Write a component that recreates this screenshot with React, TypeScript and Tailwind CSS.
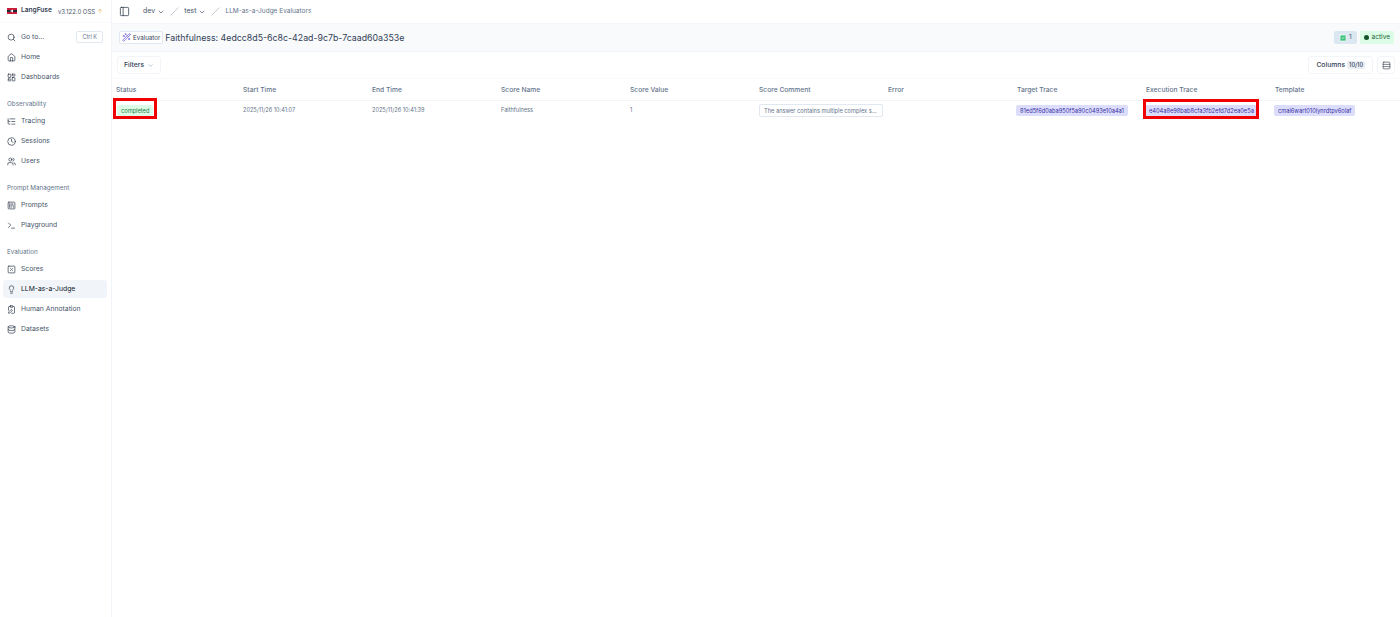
import {
  ArrowUp,
  ChevronDown,
  Clock,
  ClipboardPen,
  Database,
  Home,
  LayoutDashboard,
  Lightbulb,
  ListTree,
  PanelLeft,
  Rows3,
  Search,
  Slash,
  SquareCheck,
  SquareLibrary,
  SquarePercent,
  Terminal,
  Users,
  WandSparkles,
} from "lucide-react";

const groups = [
  {
    label: "Observability",
    items: [
      { name: "Tracing", icon: ListTree },
      { name: "Sessions", icon: Clock },
      { name: "Users", icon: Users },
    ],
  },
  {
    label: "Prompt Management",
    items: [
      { name: "Prompts", icon: SquareLibrary },
      { name: "Playground", icon: Terminal },
    ],
  },
  {
    label: "Evaluation",
    items: [
      { name: "Scores", icon: SquarePercent },
      { name: "LLM-as-a-Judge", icon: Lightbulb, active: true },
      { name: "Human Annotation", icon: ClipboardPen },
      { name: "Datasets", icon: Database },
    ],
  },
];

const columns = [
  "Status",
  "Start Time",
  "End Time",
  "Score Name",
  "Score Value",
  "Score Comment",
  "Error",
  "Target Trace",
  "Execution Trace",
  "Template",
];

function NavItem({ name, icon: Icon, active }: { name: string; icon: any; active?: boolean }) {
  return (
    <div
      className={`flex h-[18px] items-center gap-[5px] rounded-[3px] px-[4px] mb-[2px] ${
        active ? "bg-[#f1f5f9] text-[#0f172a]" : "text-[#475569]"
      }`}
    >
      <Icon size={9} strokeWidth={1.7} className="text-[#1e293b]" />
      <span className="pt-[1px] text-[6.8px] leading-none whitespace-nowrap">{name}</span>
    </div>
  );
}

function TraceBadge({ text }: { text: string }) {
  return (
    <span className="-ml-[1px] rounded-[2px] bg-[#dcdcfb] px-[4px] py-[2px] text-[5.7px] leading-[7px] text-[#3730a3] whitespace-nowrap">
      {text}
    </span>
  );
}

export default function App() {
  return (
    <div className="flex min-h-[617px] w-[1400px] bg-white font-['Inter',sans-serif] text-[#0f172a]">
      <aside className="w-[112px] shrink-0 border-r border-[#f1f5f9]">
        <div className="flex h-[23px] items-center border-b border-[#f8fafc] pl-[7px]">
          <svg width="10" height="6" viewBox="0 0 10 6" className="mr-[4px]">
            <rect width="10" height="6" fill="#c81e3a" />
            <rect y="2" width="10" height="2" fill="#1e293b" />
            <path d="M3 3 L6 1.5 L6 4.5 Z" fill="#fff" />
          </svg>
          <span className="text-[6.6px] font-semibold text-[#334155]">LangFuse</span>
          <span className="ml-[6px] text-[6px] text-[#475569] whitespace-nowrap">v3.122.0 OSS</span>
          <ArrowUp size={6} className="ml-[2px] text-[#d9a441]" />
        </div>
        <div className="pl-[3px] pr-[4px] pt-[5px]">
          <div className="flex h-[18px] items-center gap-[5px] px-[4px] mb-[2px] text-[#475569]">
            <Search size={9} strokeWidth={1.7} className="text-[#1e293b]" />
            <span className="pt-[1px] text-[6.8px] leading-none">Go to...</span>
            <span className="ml-auto rounded-[2px] border border-[#e2e8f0] px-[5px] py-[2px] text-[5.5px] leading-[6px] text-[#64748b] whitespace-nowrap">
              Ctrl K
            </span>
          </div>
          <NavItem name="Home" icon={Home} />
          <NavItem name="Dashboards" icon={LayoutDashboard} />
          {groups.map((group) => (
            <div key={group.label} className="mt-[10px]">
              <div className="flex h-[16px] items-center pt-[2px] px-[4px] text-[6.3px] text-[#64748b] whitespace-nowrap">
                {group.label}
              </div>
              {group.items.map((item) => (
                <NavItem key={item.name} name={item.name} icon={item.icon} active={item.active} />
              ))}
            </div>
          ))}
        </div>
      </aside>

      <main className="min-w-0 flex-1">
        <div className="flex h-[23px] items-center pl-[7px] text-[7px] text-[#475569]">
          <PanelLeft size={11} strokeWidth={1.5} className="text-[#1e293b]" />
          <span className="ml-[13px]">dev</span>
          <ChevronDown size={8} className="ml-[2px]" />
          <Slash size={9} strokeWidth={1} className="ml-[5px] text-[#64748b]" />
          <span className="ml-[5px]">test</span>
          <ChevronDown size={8} className="ml-[2px]" />
          <Slash size={9} strokeWidth={1} className="ml-[5px] text-[#64748b]" />
          <span className="ml-[5px] text-[6.5px] text-[#64748b]">LLM-as-a-Judge Evaluators</span>
        </div>

        <div className="flex h-[29px] items-center border-y border-[#f1f5f9] bg-[#f8fafc] pl-[7px] pr-[6px]">
          <span className="flex h-[13px] items-center gap-[2px] rounded-[2px] border border-[#e2e8f0] bg-white px-[2px] text-[6.2px] text-[#334155]">
            <WandSparkles size={9} strokeWidth={2} className="text-[#6d5fd5]" />
            Evaluator
          </span>
          <h1 className="ml-[2px] text-[8.8px] font-normal text-[#334155] whitespace-nowrap">
            Faithfulness: 4edcc8d5-6c8c-42ad-9c7b-7caad60a353e
          </h1>
          <span className="ml-auto flex h-[13px] items-center gap-[2px] rounded-[2px] bg-[#dbe7f1] px-[5px] text-[6.5px] text-[#475569]">
            <SquareCheck size={8} className="fill-[#3fc380] text-white" />1
          </span>
          <span className="ml-[3px] flex h-[13px] items-center gap-[3px] rounded-[2px] bg-[#dcfce7] px-[4px] text-[6.5px] text-[#166534]">
            <span className="h-[5px] w-[5px] rounded-full bg-[#14532d]" />
            active
          </span>
        </div>

        <div className="flex h-[27px] items-center justify-between border-b border-[#f8fafc] pl-[5px] pr-[5px]">
          <button className="flex h-[18px] items-center gap-[3px] rounded-[3px] border border-[#f1f5f9] px-[6px] text-[6.8px] font-medium text-[#334155]">
            Filters
            <ChevronDown size={7} className="text-[#94a3b8]" />
          </button>
          <div className="flex items-center gap-[4px]">
            <button className="flex h-[18px] items-center gap-[2px] rounded-[3px] border border-[#f1f5f9] px-[7px] text-[6.8px] font-medium text-[#334155]">
              Columns
              <span className="rounded-[2px] bg-[#e8edf3] px-[2px] text-[5.6px]">10/10</span>
            </button>
            <button className="flex h-[18px] w-[18px] items-center justify-center rounded-[3px] border border-[#f1f5f9]">
              <Rows3 size={9} strokeWidth={1.5} className="text-[#1e293b]" />
            </button>
          </div>
        </div>

        <div className="grid h-[22px] grid-cols-[127px_repeat(9,129px)] items-center border-b border-[#f1f5f9] pl-[4px] pt-[2px] text-[6.7px] font-medium text-[#64748b]">
          {columns.map((c) => (
            <div key={c} className="whitespace-nowrap">
              {c}
            </div>
          ))}
        </div>

        <div className="grid h-[17px] grid-cols-[127px_repeat(9,129px)] pl-[4px] pt-[1px] text-[5.6px] text-[#64748b]">
          <div className="relative flex items-center">
            <span className="ml-[1px] rounded-[2px] bg-[#dcfce7] px-[4px] py-[2px] text-[5.7px] leading-[7px] text-[#15803d]">
              completed
            </span>
            <span className="absolute left-[-3px] top-[-4px] h-[21px] w-[44px] border-[3px] border-[#f00000]" />
          </div>
          <div className="flex items-center">2025/11/26 10:41:07</div>
          <div className="flex items-center">2025/11/26 10:41:39</div>
          <div className="flex items-center">Faithfulness</div>
          <div className="flex items-center">1</div>
          <div className="flex items-center">
            <span className="block w-[124px] rounded-[2px] border border-[#e2e8f0] px-[4px] py-[2px] text-[5.7px] leading-[7px] whitespace-nowrap">
              The answer contains multiple complex s...
            </span>
          </div>
          <div />
          <div className="flex items-center">
            <TraceBadge text="81ed5f6d0aba950f5a90c0493e10a4a1" />
          </div>
          <div className="relative flex items-center">
            <TraceBadge text="e404a8e98bab8cfa3fb2efd7d2ea0e5a" />
            <span className="absolute left-[-3px] top-[-3px] h-[20px] w-[116px] border-[3px] border-[#f00000]" />
          </div>
          <div className="flex items-center">
            <TraceBadge text="cmai6wart010lynrdtpv6olaf" />
          </div>
        </div>
      </main>
    </div>
  );
}
